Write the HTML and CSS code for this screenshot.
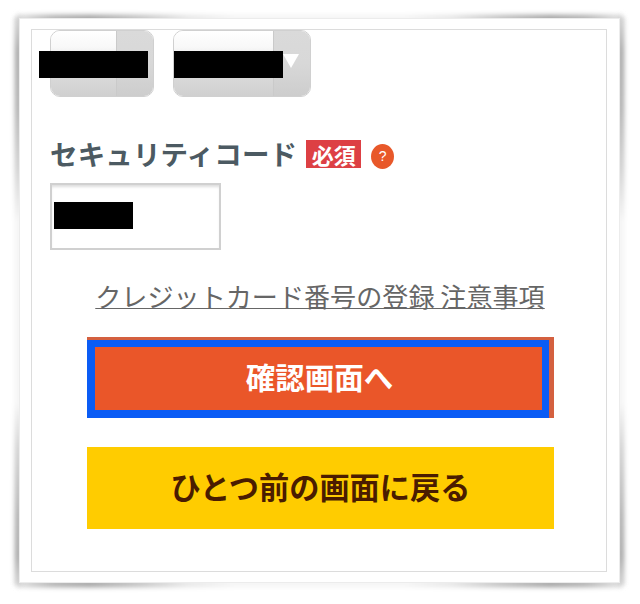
FILE: index.html
```html
<!DOCTYPE html>
<html lang="ja">
<head>
<meta charset="utf-8">
<title>確認</title>
<link rel="stylesheet" href="styles.css">
</head>
<body>
<div class="frame">
  <span class="curl curl-top"></span>
  <span class="curl curl-bottom"></span>
  <span class="curl curl-left"></span>
  <span class="curl curl-right"></span>
  <div class="sheet">
    <div class="selects">
      <div class="select select-month"><span class="pane"></span><span class="side"></span><span class="mask mask-month"></span></div>
      <div class="select select-year"><span class="pane"></span><span class="side"><svg class="arrow" viewBox="0 0 16 14" width="16" height="14"><path d="M0 0H16L8 14Z" fill="#fff"/></svg></span><span class="mask mask-year"></span></div>
    </div>
    <div class="label-row">
      <span class="label">セキュリティコード</span>
      <span class="badge">必須</span>
      <span class="help">?</span>
    </div>
    <div class="input"><span class="mask mask-code"></span></div>
    <p class="note"><a class="note-link">クレジットカード番号の登録 注意事項</a></p>
    <div class="actions">
      <div class="btn btn-next"><span class="btn-next-inner">確認画面へ</span></div>
      <div class="btn btn-back">ひとつ前の画面に戻る</div>
    </div>
  </div>
</div>
</body>
</html>
```
FILE: styles.css
```css
* { box-sizing: border-box; }
html { margin: 0; padding: 0; background: #fff; }
body {
  margin: 0;
  width: 640px;
  height: 604px;
  overflow: hidden;
  font-family: "Noto Sans CJK JP", "Liberation Sans", sans-serif;
}
.frame {
  position: relative;
  width: 601px;
  height: 565px;
  margin: 18px 0 0 19px;
  padding: 10px 12px 12px 11px;
  background: #fff;
  border: 1px solid #ececec;
}
.curl {
  position: absolute;
  z-index: -1;
  filter: blur(2.5px);
}
.curl-top, .curl-bottom {
  left: -3px;
  right: -3px;
  height: 6px;
  background: linear-gradient(90deg, #ddd 0, #aaa 6%, #999 12%, #bbb 20%, #e4e4e4 28%, #f4f4f4 36%, #f4f4f4 64%, #e4e4e4 72%, #bbb 80%, #999 88%, #aaa 94%, #ddd 100%);
}
.curl-top { top: -4px; }
.curl-bottom { bottom: -5px; }
.curl-left, .curl-right {
  top: -2px;
  bottom: -3px;
  width: 6px;
  background: linear-gradient(180deg, #ccc 0, #a0a0a0 6%, #a8a8a8 16%, #ccc 27%, #f4f4f4 36%, #f4f4f4 68%, #ccc 76%, #a8a8a8 88%, #a0a0a0 95%, #ccc 100%);
}
.curl-left { left: -5px; }
.curl-right { right: -5px; }
.sheet {
  height: 543px;
  border: 1px solid #dcdcdc;
  padding: 0 0 0 18px;
}
.selects { display: flex; gap: 19px; }
.select {
  position: relative;
  display: flex;
  height: 67px;
  border: 1px solid #d0d0d0;
  border-radius: 10px;
}
.select-month { width: 104px; }
.select-year { width: 138px; }
.pane {
  flex: 1;
  border-radius: 9px 0 0 9px;
  background: linear-gradient(180deg, #fff 0, #f8f8f8 25%, #e0e0e0 50%, #d8d8d8 75%, #d0d0d0 100%);
}
.side {
  display: flex;
  justify-content: center;
  width: 37px;
  padding: 23px 3px 0 0;
  border-left: 1px solid #cacaca;
  border-radius: 0 9px 9px 0;
  background: linear-gradient(180deg, #dadada 0, #d8d8d8 50%, #cdcdcd 100%);
}
.arrow { display: block; }
.mask { position: absolute; background: #000; height: 27px; }
.mask-month { left: -12px; top: 20px; width: 109px; }
.mask-year { left: 0; top: 20px; width: 109px; }
.label-row {
  display: flex;
  align-items: center;
  height: 30px;
  margin-top: 42px;
}
.label {
  margin: -2px 0 0 0;
  font-size: 27.5px;
  font-weight: 700;
  line-height: 30px;
  color: #4c5a62;
  letter-spacing: 0.15px;
}
.badge {
  width: 55px;
  height: 28px;
  margin-left: 9px;
  background: #dd4044;
  color: #fff;
  font-size: 22px;
  font-weight: 700;
  line-height: 28px;
  text-align: center;
}
.help {
  width: 23px;
  height: 25px;
  margin: 5px 0 0 10px;
  border-radius: 50%;
  background: #e8582a;
  color: #fff;
  font-family: "Liberation Sans", sans-serif;
  font-size: 14px;
  line-height: 25px;
  text-align: center;
}
.input {
  position: relative;
  width: 171px;
  height: 67px;
  margin-top: 14px;
  border: 2px solid #d0d0d0;
  box-shadow: inset 0 3px 3px -1px #ddd;
  background: #fff;
}
.mask-code { left: 2px; top: 17px; width: 79px; }
.note {
  margin: 28px 0 0;
  padding-right: 16px;
  height: 37px;
  font-size: 26.1px;
  line-height: 37px;
  text-align: center;
  color: #666;
}
.note-link {
  text-decoration: underline;
  text-decoration-thickness: 1px;
  text-underline-offset: 1px;
}
.actions {
  display: flex;
  flex-direction: column;
  gap: 29px;
  margin: 22px 0 0 37px;
  width: 467px;
}
.btn {
  font-weight: 700;
  text-align: center;
}
.btn-next {
  height: 81px;
  font-size: 29.5px;
  background: #d4603f;
  padding: 3px 5px 0 0;
  color: #fff;
}
.btn-next-inner {
  display: block;
  height: 78px;
  padding-left: 2px;
  border-style: solid;
  border-color: #0a5cf5;
  border-width: 7px 7px 8px 8px;
  background: #ea5629;
  line-height: 59px;
}
.btn-back {
  height: 82px;
  font-size: 30.2px;
  background: #ffcc00;
  color: #4a1c00;
  line-height: 78px;
}
```
